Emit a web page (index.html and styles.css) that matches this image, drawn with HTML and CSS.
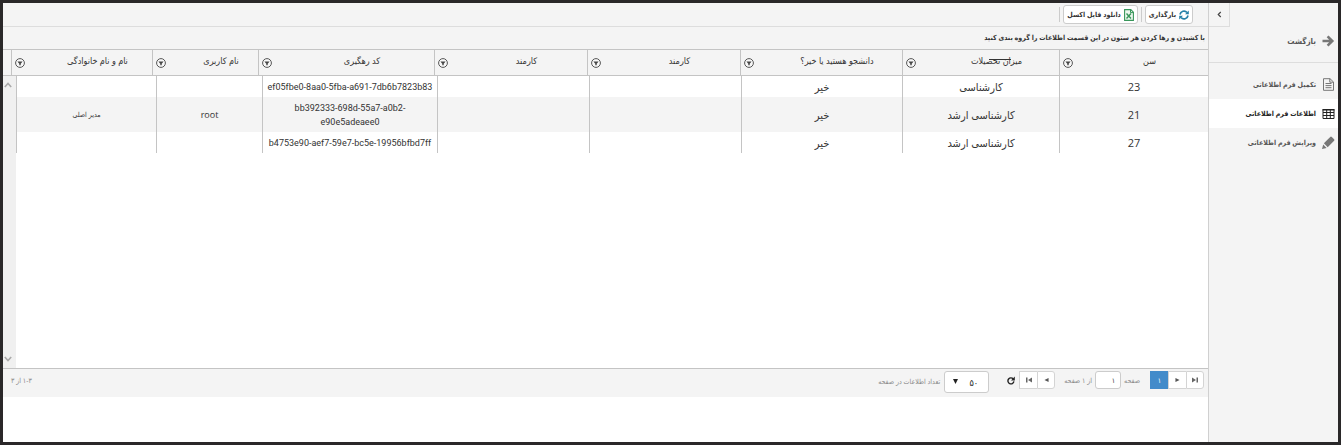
FILE: index.html
```html
<!DOCTYPE html>
<html lang="fa" dir="rtl">
<head>
<meta charset="utf-8">
<title>اطلاعات فرم اطلاعاتی</title>
<link rel="stylesheet" href="styles.css">
</head>
<body>
<svg class="defs" aria-hidden="true">
  <symbol id="filter" viewBox="0 0 10 10"><circle cx="5" cy="5" r="4.4" fill="#f8f8f8" stroke="#555" stroke-width="1"/><path d="M2.4 3.4h5.200L5.700 5.700v1.600H4.300V5.700z" fill="#444"/></symbol>
</svg>
<aside class="sidebar">
  <div class="side-top"><button class="collapse" type="button" aria-label="بستن منو"><svg viewBox="0 0 6 8" width="5" height="7"><path d="M4.5 1L1.5 4l3 3" fill="none" stroke="#444" stroke-width="1.4"/></svg></button></div>
  <a class="side-item back" href="#"><svg viewBox="0 0 12 12" width="12" height="12"><path d="M0 4.8h6.6L4.2 2.3 6 .5 11.6 6 6 11.5 4.2 9.7l2.4-2.5H0z" fill="#777"/></svg><span>بازگشت</span></a>
  <nav class="side-nav">
    <a class="side-item" href="#"><svg viewBox="0 0 12 13" width="12" height="13"><path d="M1 .7h6.5L11 4v8.3H1zM7.3.7V4.200H11M3 5.500h6M3 7.600h6M3 9.700h6" fill="none" stroke="#777" stroke-width="1"/></svg><span>تکمیل فرم اطلاعاتی</span></a>
    <a class="side-item active" href="#"><svg viewBox="0 0 12 10" width="12" height="10"><path d="M.5.5h11v9H.5zM.5 3.500h11M.5 6.500h11M4.200.5v9M7.800.5v9" fill="none" stroke="#222" stroke-width="1"/><path d="M0 0h12v1.500H0z" fill="#222"/></svg><span>اطلاعات فرم اطلاعاتی</span></a>
    <a class="side-item" href="#"><svg viewBox="0 0 13 13" width="13" height="13"><path d="M0 13l1.200-4.500 3.400 3.400zM1.900 7.300L8.200.9q.8-.7 1.600 0l2.300 2.300q.7.8 0 1.600l-6.400 6.400z" fill="#777"/></svg><span>ویرایش فرم اطلاعاتی</span></a>
  </nav>
</aside>
<main class="main">
  <div class="toolbar">
    <button class="tool" type="button"><svg viewBox="0 0 10 10" width="10" height="10"><path d="M1 4.500A4 4 0 0 1 8 2.500M9 5.500A4 4 0 0 1 2 7.500" fill="none" stroke="#2580a8" stroke-width="1.700"/><path d="M9.800.5v3.800H6zM.2 9.500V5.700H4z" fill="#2580a8"/></svg><span>بارگذاری</span></button>
    <i class="sep"></i>
    <button class="tool" type="button"><svg viewBox="0 0 10 12" width="10" height="12"><path d="M.6.6h6.200L9.400 3.200v8.200H.6z" fill="#eef8f0" stroke="#37965a" stroke-width="1.100"/><path d="M6.500.6v3h3" fill="none" stroke="#37965a"/><path d="M2.500 4.500l4.500 5M7 4.500l-4.500 5" stroke="#37965a" stroke-width="1.400"/></svg><span>دانلود فایل اکسل</span></button>
    <i class="sep"></i>
  </div>
  <div class="groupbar">با کشیدن و رها کردن هر ستون در این قسمت اطلاعات را گروه بندی کنید</div>
  <div class="grid-head">
    <table>
      <colgroup><col class="c1"><col class="c2"><col class="c3"><col class="c4"><col class="c4"><col class="c5"><col class="c6"><col class="c7"></colgroup>
      <thead><tr>
        <th scope="col"><div class="th"><span>سن</span><button type="button" aria-label="فیلتر"><svg><use href="#filter"/></svg></button></div></th>
        <th scope="col"><div class="th"><span class="marked">میزان تحصیلات</span><button type="button" aria-label="فیلتر"><svg><use href="#filter"/></svg></button></div></th>
        <th scope="col"><div class="th"><span>دانشجو هستید یا خیر؟</span><button type="button" aria-label="فیلتر"><svg><use href="#filter"/></svg></button></div></th>
        <th scope="col"><div class="th"><span>کارمند</span><button type="button" aria-label="فیلتر"><svg><use href="#filter"/></svg></button></div></th>
        <th scope="col"><div class="th"><span>کارمند</span><button type="button" aria-label="فیلتر"><svg><use href="#filter"/></svg></button></div></th>
        <th scope="col"><div class="th"><span>کد رهگیری</span><button type="button" aria-label="فیلتر"><svg><use href="#filter"/></svg></button></div></th>
        <th scope="col"><div class="th"><span>نام کاربری</span><button type="button" aria-label="فیلتر"><svg><use href="#filter"/></svg></button></div></th>
        <th scope="col"><div class="th"><span>نام و نام خانوادگی</span><button type="button" aria-label="فیلتر"><svg><use href="#filter"/></svg></button></div></th>
      </tr></thead>
    </table>
  </div>
  <div class="grid-body">
    <div class="rows">
      <table>
        <colgroup><col class="c1"><col class="c2"><col class="b3"><col class="b4"><col class="b4"><col class="b5"><col class="c6"><col class="c7"></colgroup>
        <tbody>
          <tr><td class="num">23</td><td class="fa">کارشناسی</td><td class="fa">خیر</td><td></td><td></td><td class="code">ef05fbe0-8aa0-5fba-a691-7db6b7823b83</td><td></td><td></td></tr>
          <tr class="alt"><td class="num">21</td><td class="fa">کارشناسی ارشد</td><td class="fa">خیر</td><td></td><td></td><td class="code"><bdi>bb392333-698d-55a7-a0b2-<br>e90e5adeaee0</bdi></td><td>root</td><td class="name">مدیر اصلی</td></tr>
          <tr><td class="num">27</td><td class="fa">کارشناسی ارشد</td><td class="fa">خیر</td><td></td><td></td><td class="code">b4753e90-aef7-59e7-bc5e-19956bfbd7ff</td><td></td><td></td></tr>
        </tbody>
      </table>
    </div>
    <div class="scroll"><svg viewBox="0 0 8 6" width="8" height="6"><path d="M.8 5L4 1.500 7.200 5" fill="none" stroke="#aaa" stroke-width="1.600"/></svg><svg viewBox="0 0 8 6" width="8" height="6"><path d="M.8 1L4 4.500 7.200 1" fill="none" stroke="#aaa" stroke-width="1.600"/></svg></div>
  </div>
  <div class="pager">
    <div class="pages">
      <button type="button" aria-label="صفحه آخر"><svg viewBox="0 0 6 6" width="6" height="6"><path d="M0 .5L4 3 0 5.500zM4.500.5H6v5H4.500z" fill="#666"/></svg></button>
      <button type="button" aria-label="بعدی"><svg viewBox="0 0 6 6" width="5" height="6"><path d="M.5.500L5.500 3l-5 2.500z" fill="#555"/></svg></button>
      <button type="button" class="current">۱</button>
    </div>
    <label class="page-label" for="page">صفحه</label>
    <input id="page" type="text" value="۱">
    <span class="of">از ۱ صفحه</span>
    <div class="pages">
      <button type="button" aria-label="قبلی"><svg viewBox="0 0 6 6" width="5" height="6"><path d="M5.500.5L.5 3l5 2.500z" fill="#555"/></svg></button>
      <button type="button" aria-label="صفحه اول"><svg viewBox="0 0 6 6" width="6" height="6"><path d="M6 .5L2 3l4 2.500zM0 .5h1.500v5H0z" fill="#666"/></svg></button>
    </div>
    <button class="refresh" type="button" aria-label="بارگذاری دوباره"><svg viewBox="0 0 8 9" width="8" height="9"><path d="M6.300 3A3 3 0 1 0 6.900 5.400" fill="none" stroke="#222" stroke-width="1.400"/><path d="M7.800.6v3.800H4z" fill="#222"/></svg></button>
    <span class="size"><select id="size"><option>۵۰</option></select><svg viewBox="0 0 5 5" width="5" height="5"><path d="M0 0h5L2.500 5z" fill="#222"/></svg></span>
    <label for="size">تعداد اطلاعات در صفحه</label>
    <span class="range">۱-۳ از ۳</span>
  </div>
</main>
</body>
</html>
```

FILE: styles.css
```css
* { box-sizing: border-box; }
body {
  display: flex;
  min-height: 100vh;
  margin: 0;
  border: 3px solid #2a2829;
  background: #fff;
  color: #333;
  font: 9px/14px "Open Sans", "DejaVu Sans Condensed", "DejaVu Sans", sans-serif;
}
button, input, select { font: inherit; color: inherit; margin: 0; padding: 0; }
button { cursor: pointer; }
svg { display: block; flex: none; }
.defs { position: absolute; width: 0; height: 0; }

.sidebar { flex: 0 0 130px; background: #f4f4f4; border-left: 1px solid #d0d0d0; }
.side-top { height: 24px; }
.collapse { display: flex; align-items: center; justify-content: center; width: 21px; height: 24px; margin-right: auto; border: solid #ddd; border-width: 0 1px 1px 0; background: none; }
.side-item {
  display: flex; align-items: center; gap: 6px; height: 29px; padding-right: 3px;
  color: #555; font-size: 7px; font-weight: bold; text-decoration: none; white-space: nowrap;
}
.side-item svg { width: 13px; }
.back { height: 36px; padding-bottom: 8px; border-bottom: 1px solid #ddd; font-size: 8px; }
.side-nav { padding-top: 7px; }
.active { background: #fff; color: #222; }

.main { flex: 1; min-width: 0; }
.toolbar { display: flex; align-items: center; gap: 3px; height: 24px; padding-right: 15px; background: #f4f4f4; border-bottom: 1px solid #ddd; }
.tool { display: flex; align-items: center; gap: 3px; height: 19px; padding: 0 3px; border: 1px solid #ccc; border-radius: 3px; background: #fff; font-size: 7px; font-weight: bold; white-space: nowrap; }
.sep { width: 1px; height: 15px; background: #ccc; }
.groupbar { height: 22px; padding: 4px 3px 0 0; background: #f4f4f4; font-size: 7px; font-weight: bold; }

table { width: 100%; table-layout: fixed; border-collapse: separate; border-spacing: 0; }
.c1 { width: 149px; }
.c2 { width: 157px; }
.c3 { width: 162px; }
.b3 { width: 161px; }
.c4 { width: 153px; }
.b4 { width: 152px; }
.c5 { width: 176px; }
.b5 { width: 175px; }
.c6 { width: 106px; }
.grid-head { padding-left: 8px; background: #f4f4f4; border: solid #c4c4c4; border-width: 1px 0; }
th { height: 25px; padding: 0; border-left: 1px solid #c4c4c4; font-weight: normal; }
.th { display: flex; align-items: center; height: 25px; padding-left: 3px; }
.th span { flex: 1; padding: 0 0 4px 18px; text-align: center; }
.th button { width: 10px; height: 10px; border: 0; background: none; }
.th button svg { width: 10px; height: 10px; }
.marked { position: relative; }
.marked::after { content: ""; position: absolute; top: 5px; right: 48px; width: 22px; height: 1px; background: #333; }

.grid-body { display: flex; height: 293px; border-bottom: 1px solid #c4c4c4; }
.rows { flex: 1; min-width: 0; }
td { height: 21px; padding: 0 6px; border-left: 1px solid #c4c4c4; text-align: center; font-size: 9px; white-space: nowrap; }
.alt td { height: 35px; background: #f4f4f4; }
.num, td.fa { font-size: 11px; }
td.code { padding: 0 3px; font-family: Roboto, sans-serif; }
td.name { font-size: 7px; }
.scroll { display: flex; flex-direction: column; justify-content: space-between; width: 13px; padding: 6px 4px 6px 1px; background: #f0f0f0; }

.pager { display: flex; align-items: flex-start; height: 28px; padding: 2px 4px 0 8px; background: #f4f4f4; color: #888; font-size: 7px; line-height: 19px; white-space: nowrap; }
.pages { display: flex; }
.pages button { display: flex; align-items: center; justify-content: center; width: 18px; height: 18px; border: 1px solid #d4d4d4; border-right-width: 0; background: #fff; }
.pages button:first-child { border-right-width: 1px; border-radius: 0 3px 3px 0; }
.pages .current { background: #428bca; border-color: #428bca; color: #fff; }
.page-label { margin: 0 10px 0 3px; }
#page { width: 26px; height: 18px; padding-right: 5px; border: 1px solid #ccc; border-radius: 3px; background: #fff; color: #333; }
.of { margin: 0 3px 0 9px; }
.refresh { height: 18px; margin: 0 4px 0 18px; border: 0; background: none; }
.size { position: relative; margin-left: 4px; }
#size { appearance: none; display: block; width: 45px; height: 22px; padding-right: 10px; border: 1px solid #ccc; border-radius: 3px; background: #fff; color: #222; font-size: 9px; }
.size svg { position: absolute; left: 9px; top: 8px; pointer-events: none; }
.size + label { line-height: 22px; }
.range { margin-right: auto; }
```
